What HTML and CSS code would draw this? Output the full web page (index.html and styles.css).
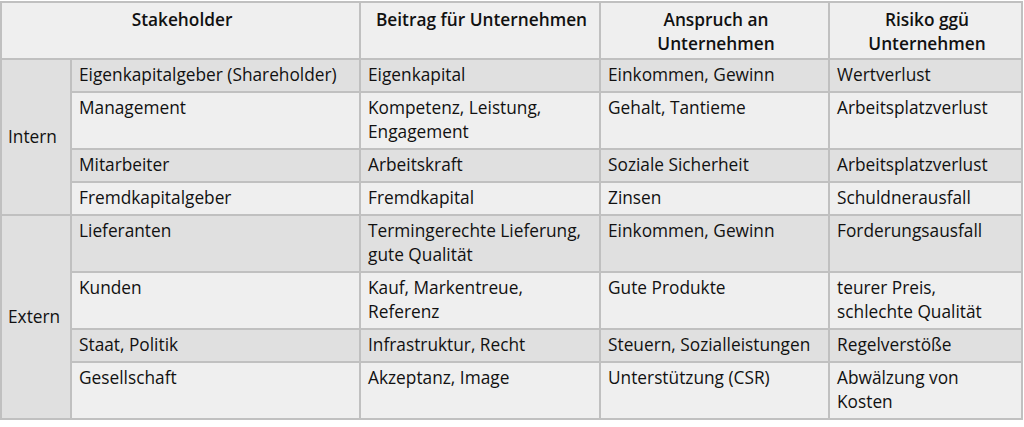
FILE: index.html
```html
<!DOCTYPE html>
<html lang="de">
<head>
<meta charset="utf-8">
<title>Stakeholder</title>
<link rel="stylesheet" href="styles.css">
</head>
<body>
<table class="grid">
  <colgroup>
    <col class="c-a"><col class="c-b"><col class="c-c"><col class="c-d"><col class="c-e">
  </colgroup>
  <thead>
    <tr>
      <th colspan="2">Stakeholder</th>
      <th>Beitrag für Unternehmen</th>
      <th>Anspruch an<br>Unternehmen</th>
      <th>Risiko ggü<br>Unternehmen</th>
    </tr>
  </thead>
  <tbody>
    <tr class="dark">
      <td rowspan="4" class="group">Intern</td>
      <td>Eigenkapitalgeber (Shareholder)</td>
      <td>Eigenkapital</td>
      <td>Einkommen, Gewinn</td>
      <td>Wertverlust</td>
    </tr>
    <tr>
      <td>Management</td>
      <td>Kompetenz, Leistung,<br>Engagement</td>
      <td>Gehalt, Tantieme</td>
      <td>Arbeitsplatzverlust</td>
    </tr>
    <tr class="dark">
      <td>Mitarbeiter</td>
      <td>Arbeitskraft</td>
      <td>Soziale Sicherheit</td>
      <td>Arbeitsplatzverlust</td>
    </tr>
    <tr>
      <td>Fremdkapitalgeber</td>
      <td>Fremdkapital</td>
      <td>Zinsen</td>
      <td>Schuldnerausfall</td>
    </tr>
    <tr class="dark">
      <td rowspan="4" class="group">Extern</td>
      <td>Lieferanten</td>
      <td>Termingerechte Lieferung,<br>gute Qualität</td>
      <td>Einkommen, Gewinn</td>
      <td>Forderungsausfall</td>
    </tr>
    <tr>
      <td>Kunden</td>
      <td>Kauf, Markentreue,<br>Referenz</td>
      <td>Gute Produkte</td>
      <td>teurer Preis,<br>schlechte Qualität</td>
    </tr>
    <tr class="dark">
      <td>Staat, Politik</td>
      <td>Infrastruktur, Recht</td>
      <td>Steuern, Sozialleistungen</td>
      <td>Regelverstöße</td>
    </tr>
    <tr>
      <td>Gesellschaft</td>
      <td>Akzeptanz, Image</td>
      <td>Unterstützung (CSR)</td>
      <td>Abwälzung von<br>Kosten</td>
    </tr>
  </tbody>
</table>
</body>
</html>
```

FILE: styles.css
```css
html, body {
  margin: 0;
  padding: 0;
  background: #ffffff;
}
body {
  padding-top: 1px;
  font-family: "Open Sans", Lato, "Liberation Sans", sans-serif;
  font-size: 17.3px;
  color: #111111;
}
.grid {
  border-collapse: collapse;
  table-layout: fixed;
  width: 1021px;
  margin-left: 0;
}
.c-a { width: 70px; }
.c-b { width: 289px; }
.c-c { width: 240px; }
.c-d { width: 229px; }
.c-e { width: 193px; }
.grid th,
.grid td {
  border: 2px solid #c0c0c0;
  background: #efefef;
  padding: 3px 4px 4px 7px;
  line-height: 24px;
  vertical-align: top;
  text-align: left;
  white-space: nowrap;
}
.grid th {
  font-weight: 600;
  text-align: center;
  padding-top: 5px;
  padding-bottom: 2px;
}
.grid tr.dark td {
  background: #e0e0e0;
}
.grid td.group {
  background: #e0e0e0;
  vertical-align: middle;
  padding-left: 6px;
}
```
